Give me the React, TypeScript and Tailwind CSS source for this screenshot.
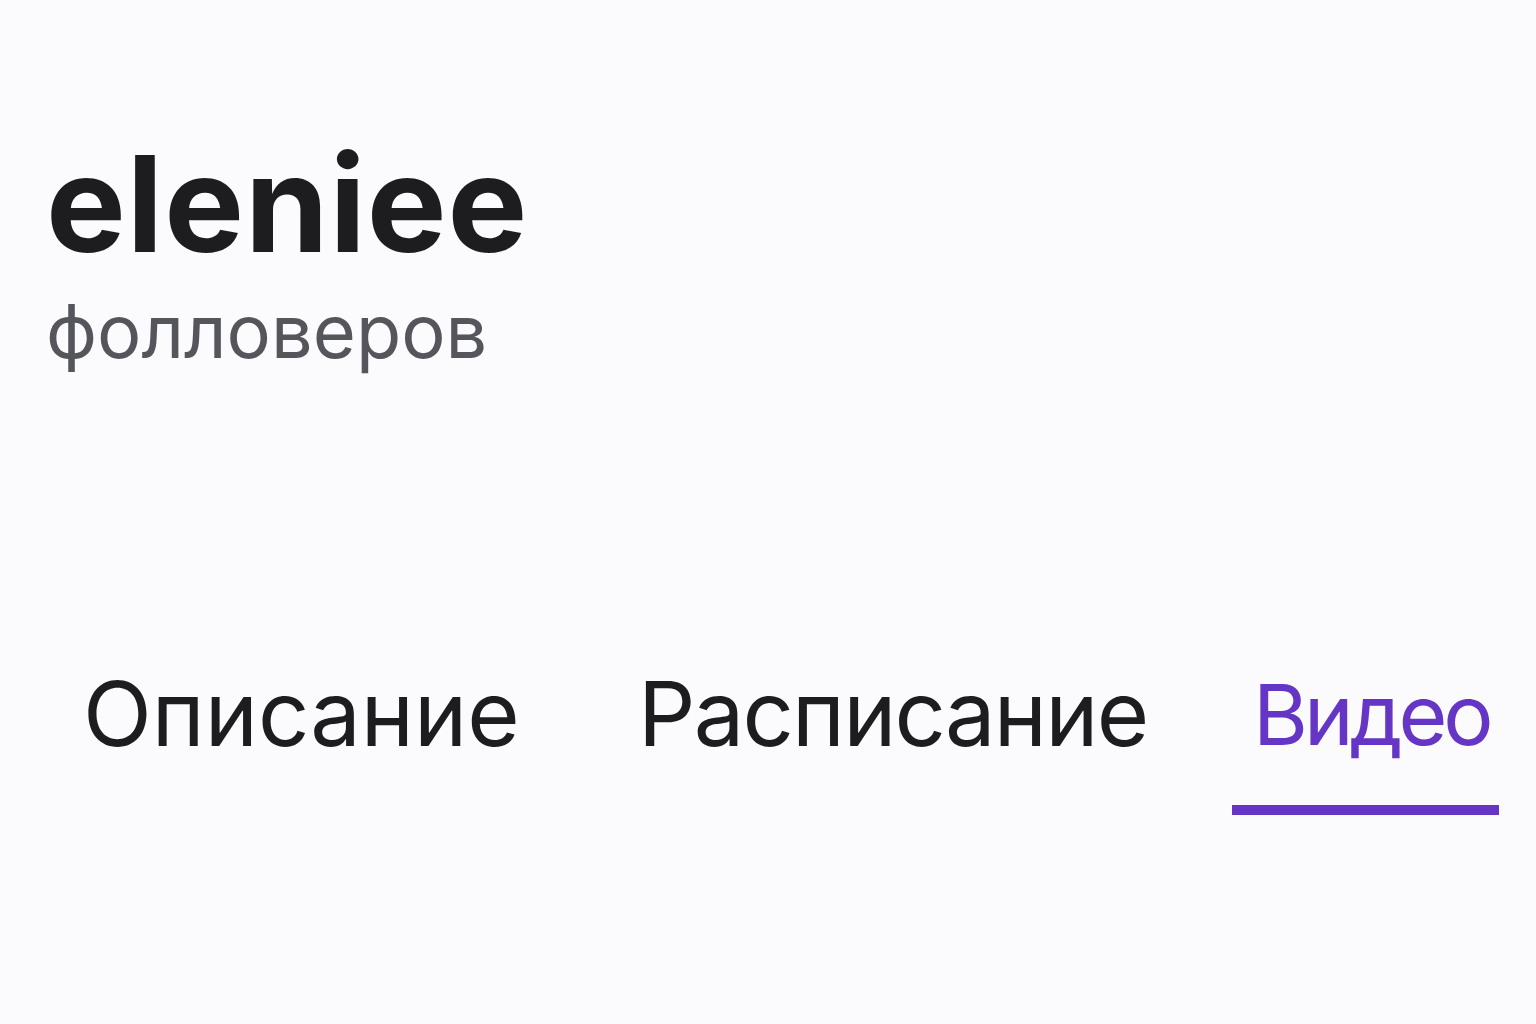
export default function App() {
  return (
    <div className="h-[1024px] w-[1536px] overflow-hidden bg-[#fbfbfd] font-['Inter','Noto_Sans',sans-serif]">
      <div className="px-[46px] pt-[136px]">
        <h1 className="text-[134px] font-bold leading-[1] tracking-[1px] text-[#1d1d20]">eleniee</h1>
        <p className="mt-[24px] text-[74px] leading-[1] text-[#55565c]">фолловеров</p>
      </div>
      <nav className="mt-[301px] flex items-start pl-[83px]">
        <div className="w-[555px] shrink-0">
          <span className="text-[90px] leading-[1] text-[#1d1d20]">Описание</span>
        </div>
        <div className="w-[594px] shrink-0">
          <span className="text-[90px] leading-[1] tracking-[-1.8px] text-[#1d1d20]">Расписание</span>
        </div>
        <div className="flex w-[267px] shrink-0 flex-col">
          <span className="whitespace-nowrap pl-[21px] pt-[2px] text-[84px] leading-[88px] tracking-[-4px] text-[#6536c6]">
            Видео
          </span>
          <div className="mt-[46px] h-[10px] w-full bg-[#6536c6]" />
        </div>
      </nav>
    </div>
  )
}
